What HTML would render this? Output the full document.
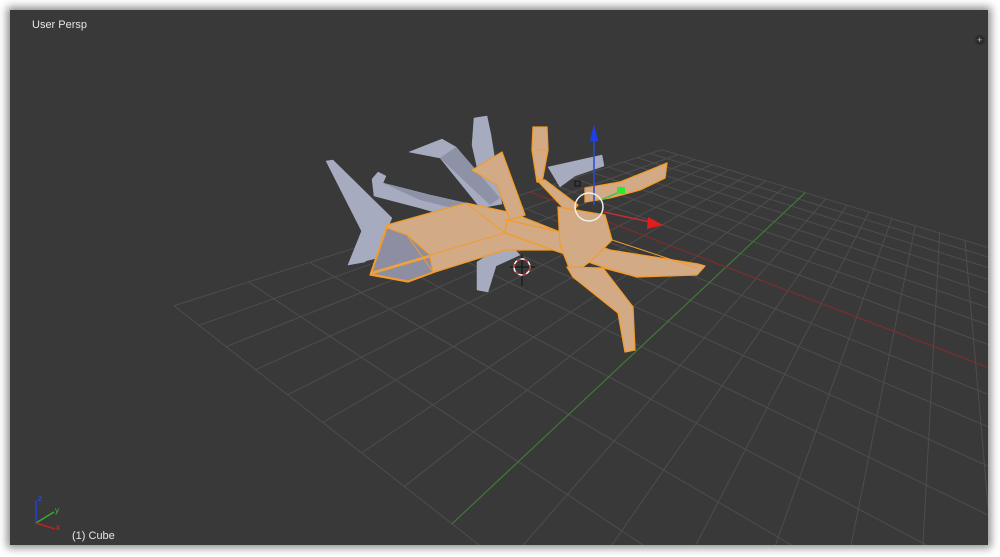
<!DOCTYPE html>
<html><head><meta charset="utf-8"><style>
html,body{margin:0;padding:0;background:#fff;width:1000px;height:557px;overflow:hidden}
#vp{position:absolute;left:10px;top:10px;width:978px;height:535px;background:#393939;box-shadow:0 0 8px 3px rgba(0,0,0,0.45);overflow:hidden}
svg{position:absolute;left:0;top:0}
.t{position:absolute;font-family:"Liberation Sans",sans-serif;font-size:11px;color:#e6e6e6;line-height:13px}
</style></head><body>
<div id="vp">
<svg width="978" height="535" viewBox="10 10 978 535" id="s">
<g id="grid" stroke="#4d4d4d" stroke-width="1" fill="none"></g>
<g id="axes" fill="none" stroke-width="1.2"></g>
<g fill="#a7abbf" stroke="#a7abbf" stroke-width="0.5">
<polygon points="326,161 333,160 392,218 384,236 365,262 348,265 362,232"/>
<polygon points="372,179 378,172 386,176 383,183 430,195 470,204 468,222 420,208 374,196"/>
<polygon points="474,118 487,116 491,135 502,204 486,207 472,145"/>
<polygon points="409,152 442,139 456,147 500,198 482,210 440,158"/>
<polygon points="548,167 602,155 604,166 575,176 560,187"/>
<polygon points="477,262 492,252 510,244 520,255 496,266 488,292 477,290"/>
<polygon points="348,265 362,230 388,222 378,258"/>
</g>
<g fill="#8e92a6">
<polygon points="440,158 456,147 500,198 490,205"/>
<polygon points="383,183 430,195 470,204 468,212 420,200"/>
</g>
<g fill="#d2aa86" stroke="#f39c2a" stroke-width="1.3" stroke-linejoin="round">
<polygon points="370,275 387,225 466,203 512,213 560,232 560,250 505,250 435,272 408,282"/>
<polygon points="505,233 553,250 603,267 637,277 697,275 705,266 698,264 610,250 560,232 507,220"/>
<polygon points="472,170 502,152 525,215 510,220 497,185"/>
<polygon points="533,127 547,127 548,150 542,182 537,182 532,150"/>
<polygon points="537,180 545,180 578,205 570,215"/>
<polygon points="585,188 620,182 650,170 667,163 665,178 640,190 610,198 585,202"/>
<polygon points="558,207 605,215 612,240 592,260 572,275 560,245"/>
<polygon points="567,267 603,268 633,307 635,350 625,352 618,313 573,277"/>
</g>
<g fill="#8d8ea2" stroke="#f39c2a" stroke-width="1">
<polygon points="387,228 407,235 430,255 372,272"/>
<polygon points="372,274 430,257 433,272 408,281"/>
</g>
<g stroke="#f39c2a" stroke-width="1" fill="none">
<polyline points="407,235 433,272"/><polyline points="430,255 505,233"/>
<polyline points="466,203 505,233 553,250"/><polyline points="537,150 547,150"/>
<polyline points="612,240 697,268"/><polyline points="603,268 637,277"/>
</g>
<line x1="594" y1="205" x2="594" y2="140" stroke="#2a4ad0" stroke-width="1.5"/>
<polygon points="594,124 598,141 590,141" fill="#1d3fe8"/>
<line x1="604" y1="212" x2="650" y2="222" stroke="#c03030" stroke-width="1.5"/>
<polygon points="663,225 648,217 647,229" fill="#e41c1c"/>
<line x1="601" y1="200" x2="622" y2="191" stroke="#4cc04c" stroke-width="1.5"/>
<rect x="617" y="187" width="8" height="7" fill="#2ee82e"/>
<circle cx="589" cy="207" r="14" fill="none" stroke="#f0f0f0" stroke-width="1.5"/>
<rect x="575" y="181" width="5" height="5" fill="none" stroke="#111" stroke-width="1"/>
<line x1="510" y1="267" x2="535" y2="267" stroke="#111" stroke-width="1"/>
<line x1="522" y1="254" x2="522" y2="286" stroke="#111" stroke-width="1"/>
<circle cx="522" cy="267" r="8" fill="none" stroke="#fff" stroke-width="1.5"/>
<circle cx="522" cy="267" r="8" fill="none" stroke="#c83030" stroke-width="1.5" stroke-dasharray="4 4"/>
<line x1="36" y1="523" x2="36" y2="500" stroke="#2040e0" stroke-width="1.5"/>
<line x1="36" y1="523" x2="54" y2="512" stroke="#30b030" stroke-width="1.5"/>
<line x1="36" y1="523" x2="55" y2="529" stroke="#c02020" stroke-width="1.5"/>
<text x="38" y="501" fill="#3050f0" font-size="8" font-family="Liberation Sans,sans-serif">z</text>
<text x="55" y="513" fill="#40c040" font-size="8" font-family="Liberation Sans,sans-serif">y</text>
<text x="56" y="530" fill="#d03030" font-size="8" font-family="Liberation Sans,sans-serif">x</text>
<circle cx="980" cy="40" r="5" fill="#2c2c2c"/>
<text x="977" y="43" fill="#bbb" font-size="9" font-family="Liberation Sans,sans-serif">+</text>
</svg>
<div class="t" style="left:22px;top:9px">User Persp</div>
<div class="t" style="left:62px;top:520px">(1) Cube</div>
</div>
<script>
(function(){
var O=[726,267],VX=[-449,-183],VY=[949,58],wx=-0.2002,wy=0.5513;
function P(X,Y){var w=1+wx*X+wy*Y;return [(O[0]+wx*X*VX[0]+wy*Y*VY[0])/w,(O[1]+wx*X*VX[1]+wy*Y*VY[1])/w];}
var g=document.getElementById('grid'),a=document.getElementById('axes'),ns='http://www.w3.org/2000/svg';
function L(p,q,c,parent){var l=document.createElementNS(ns,'line');l.setAttribute('x1',p[0]);l.setAttribute('y1',p[1]);l.setAttribute('x2',q[0]);l.setAttribute('y2',q[1]);if(c)l.setAttribute('stroke',c);parent.appendChild(l);}
var n=8;
for(var i=-n;i<=n;i++){var t=i/n;if(i!==0){L(P(t,-1),P(t,1),null,g);L(P(-1,t),P(1,t),null,g);}}
L(P(0,-1),P(0,1),'#3f7a36',a);L(P(-1,0),P(1,0),'#7a2e2e',a);
})();
</script>
</body></html>
